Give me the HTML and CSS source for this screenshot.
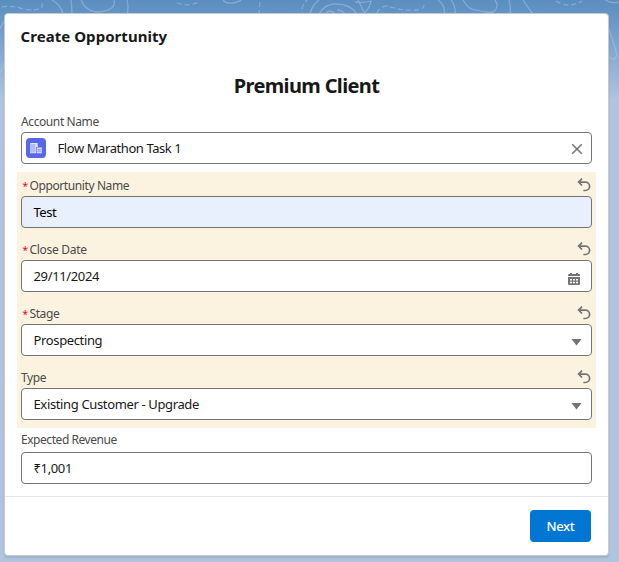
FILE: index.html
```html
<!DOCTYPE html>
<html lang="en">
<head>
<meta charset="utf-8">
<title>Create Opportunity</title>
<link rel="stylesheet" href="styles.css">
</head>
<body>
<svg class="backdrop" width="619" height="100" viewBox="0 0 619 100" aria-hidden="true">
  <g fill="none" stroke="#a9c8e6" stroke-opacity=".5" stroke-width="1.3">
    <path d="M52 0Q61 5 63 14M71 0Q72 7 72 14M81 0Q86 12 99 12Q117 10 114 0M127 0Q129 7 127 14"/>
    <path d="M223 0Q226 4 233 3Q239 2 241 0M310 14Q312 5 319 0M319 14Q325 4 335 4Q351 4 357 14M326 13Q330 9 334 13M337 10Q342 10 345 14M358 0Q362 8 365 14M355 2Q364 3 371 1Q370 8 364 13M438 0Q446 6 444 14M451 0Q456 6 455 14M463 0Q469 11 477 10Q485 13 493 12Q500 7 495 0M509 0Q511 7 510 14M523 0Q528 8 533 14M605 0Q612 4 619 2"/>
    <path d="M608 27Q614 43 617 55Q615 62 609 57M0 73Q4 69 4 62M0 29Q3 22 5 20"/>
    <path stroke-dasharray="5 3" d="M2 7Q13 5 23 9Q36 12 42 7Q43 2 40 1M177 3Q187 7 199 2M260 2L259 14M302 9Q303 4 307 0M377 13Q380 6 388 6Q401 11 416 10Q425 10 424 3M556 1Q568 9 582 1"/>
  </g>
</svg>
<main class="card">
  <h2 class="card-title">Create Opportunity</h2>
  <h1 class="heading">Premium Client</h1>
  <section class="field plain">
    <div class="label-row"><span class="label">Account Name</span></div>
    <div class="control lookup">
      <svg class="account-icon" width="20" height="20" viewBox="0 0 20 20"><rect width="20" height="20" rx="4" fill="#5867e8"/><path fill="#e4e6ff" d="M4.2 5h7.5v4H10v6.2H4.2zM10.7 9.6h5.1v5.6h-5.1z"/><path fill="none" stroke="#8791ed" stroke-width=".6" d="M4.3 7h5.5M4.3 9h5.5M4.3 11h5.5M4.3 13h5.5M6 6v9M8 6v9M11.2 11.5h4.4M11.2 13.2h4.4M12.5 10.5v4M14 10.5v4"/></svg>
      <span class="value account-value">Flow Marathon Task 1</span>
      <svg class="clear" width="12" height="12" viewBox="0 0 12 12"><path d="M1.2 1.2l9.6 9.6M10.8 1.2l-9.6 9.6" fill="none" stroke="#747474" stroke-width="1.5"/></svg>
    </div>
  </section>
  <div class="edited">
    <section class="field">
      <div class="label-row"><span class="required">*</span><span class="label">Opportunity Name</span>
        <svg class="undo" width="14" height="14" viewBox="0 0 14 14"><path d="M5 .6L1.6 4.1l3.4 3.4M2 4.1h6.4a4.2 4.2 0 0 1 0 8.4H6.4"/></svg></div>
      <div class="control filled"><span class="value test-value">Test</span></div>
    </section>
    <section class="field">
      <div class="label-row"><span class="required">*</span><span class="label date-label">Close Date</span>
        <svg class="undo" width="14" height="14" viewBox="0 0 14 14"><path d="M5 .6L1.6 4.1l3.4 3.4M2 4.1h6.4a4.2 4.2 0 0 1 0 8.4H6.4"/></svg></div>
      <div class="control"><span class="value">29/11/2024</span>
        <svg class="calendar" width="12" height="14" viewBox="0 0 12 14"><path fill="#747474" d="M2 1h2v1h4V1h2v1h1q1 0 1 1v1H0V3q0-1 1-1h1zM0 5h12v7q0 1-1 1H1q-1 0-1-1z"/><path fill="#fff" d="M2 7h2v1.5H2zm3 0h2v1.5H5zm3 0h2v1.5H8zM2 9.7h2v1.5H2zm3 0h2v1.5H5zm3 0h2v1.5H8z"/></svg></div>
    </section>
    <section class="field">
      <div class="label-row"><span class="required">*</span><span class="label">Stage</span>
        <svg class="undo" width="14" height="14" viewBox="0 0 14 14"><path d="M5 .6L1.6 4.1l3.4 3.4M2 4.1h6.4a4.2 4.2 0 0 1 0 8.4H6.4"/></svg></div>
      <div class="control"><span class="value">Prospecting</span><span class="caret"></span></div>
    </section>
    <section class="field">
      <div class="label-row"><span class="label">Type</span>
        <svg class="undo" width="14" height="14" viewBox="0 0 14 14"><path d="M5 .6L1.6 4.1l3.4 3.4M2 4.1h6.4a4.2 4.2 0 0 1 0 8.4H6.4"/></svg></div>
      <div class="control"><span class="value">Existing Customer - Upgrade</span><span class="caret"></span></div>
    </section>
  </div>
  <section class="field plain revenue">
    <div class="label-row"><span class="label">Expected Revenue</span></div>
    <div class="control"><span class="value">₹1,001</span></div>
  </section>
  <footer class="footer"><button class="next">Next</button></footer>
</main>
</body>
</html>
```
FILE: styles.css
```css
* { box-sizing: border-box; }
html, body { margin: 0; height: 562px; overflow: hidden; }
body {
  padding: 13px 10px 6px 4px;
  background: linear-gradient(#5b8dbf 0, #6494c6 14px, #b0c4df 100px, #b0c4df 100%);
  font: 13px/18px "Noto Sans", "Open Sans", sans-serif;
  color: #181818;
}
.backdrop { position: absolute; left: 0; top: 0; z-index: -1; }
.card {
  height: 543px;
  border: 1px solid #c9c9c9;
  border-radius: 4px;
  background: #fff;
  box-shadow: 0 2px 2px rgba(0, 0, 0, .1);
}
.card-title { margin: 0; padding: 10px 0 0 15.5px; font-size: 15px; line-height: 24px; letter-spacing: .05px; }
.heading { margin: 23px 0 0; text-align: center; font-size: 20px; line-height: 30px; letter-spacing: -.65px; }
.field { height: 64px; padding: 5px 4px 0; }
.plain { margin: 7px 12px 0; }
.label-row { display: flex; align-items: center; height: 19px; padding-bottom: 2px; color: #4a4a4a; font-size: 12px; }
.label { letter-spacing: -.4px; }
.date-label { letter-spacing: -.3px; }
.required { width: 8.5px; padding-left: 1.5px; color: #ea001e; font-size: 10px; }
.undo { margin: 0 1px 1px auto; fill: none; stroke: #747474; stroke-width: 1.7; }
.control {
  display: flex;
  align-items: center;
  height: 32px;
  padding: 0 9px 0 11.5px;
  border: 1px solid #747474;
  border-radius: 4px;
  background: #fff;
}
.filled { background: #e8f0fe; }
.value { letter-spacing: -.36px; }
.test-value { letter-spacing: -.5px; color: #000; }
.lookup { padding: 0 8px 0 4px; }
.account-value { margin-left: 11.5px; letter-spacing: -.42px; }
.clear { margin: 2px 0 0 auto; }
.calendar { margin: 5px 2px 0 auto; }
.caret { width: 11px; height: 7px; margin: 4px 0 0 auto; background: #747474; clip-path: polygon(0 0, 100% 0, 50% 100%); }
.edited { height: 256px; margin: 0 12px; background: #fbf3e0; }
.revenue { margin-top: 0; padding-top: 3px; }
.revenue .label-row { height: 21px; padding: 0; align-items: flex-start; }
.revenue .label { letter-spacing: -.45px; }
.footer {
  display: flex;
  justify-content: flex-end;
  margin-top: 4px;
  padding: 13px 17px 0;
  border-top: 1px solid #e5e5e5;
}
.next {
  width: 61px;
  height: 32px;
  padding: 0;
  border: 0;
  border-radius: 4px;
  background: #0176d3;
  color: #fff;
  font: 500 13px/18px "Noto Sans", sans-serif;
  letter-spacing: -.35px;
}
```
